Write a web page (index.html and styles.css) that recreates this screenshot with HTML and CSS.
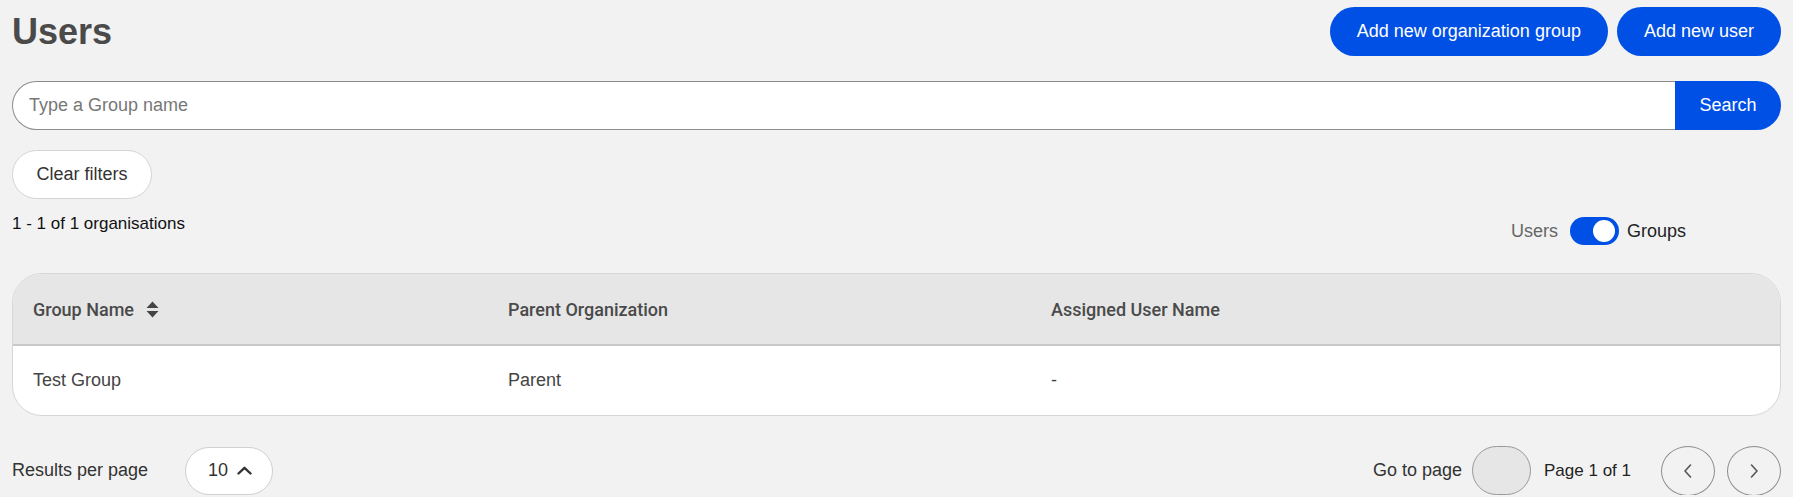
FILE: index.html
```html
<!DOCTYPE html>
<html lang="en">
<head>
<meta charset="utf-8">
<title>Users</title>
<link rel="stylesheet" href="styles.css">
</head>
<body>
<div class="page">
  <header class="top">
    <h1 class="title">Users</h1>
    <div class="actions">
      <button class="btn-primary">Add new organization group</button>
      <button class="btn-primary">Add new user</button>
    </div>
  </header>

  <div class="search">
    <input class="search-input" type="text" placeholder="Type a Group name">
    <button class="search-btn">Search</button>
  </div>

  <button class="btn-outline">Clear filters</button>

  <div class="info">
    <div class="count">1 - 1 of 1 organisations</div>
    <div class="switch">
      <span class="switch-off">Users</span>
      <span class="track"><span class="knob"></span></span>
      <span class="switch-on">Groups</span>
    </div>
  </div>

  <div class="table">
    <div class="row head">
      <div class="cell">Group Name
        <svg class="sort" width="13" height="17" viewBox="0 0 13 17"><path d="M6.5 0.5 L12.5 7 H0.5 Z M6.5 16.5 L12.5 10 H0.5 Z" fill="#444"/></svg>
      </div>
      <div class="cell">Parent Organization</div>
      <div class="cell">Assigned User Name</div>
    </div>
    <div class="row body">
      <div class="cell">Test Group</div>
      <div class="cell">Parent</div>
      <div class="cell">-</div>
    </div>
  </div>

  <footer class="foot">
    <div class="per-page">
      <span class="label">Results per page</span>
      <button class="size-pill">10
        <svg width="15" height="9" viewBox="0 0 15 9"><path d="M1.5 7.5 L7.5 1.8 L13.5 7.5" fill="none" stroke="#333" stroke-width="2.4" stroke-linecap="round" stroke-linejoin="round"/></svg>
      </button>
    </div>
    <div class="pager">
      <span class="label">Go to page</span>
      <input class="goto" type="text">
      <span class="page-of">Page 1 of 1</span>
      <div class="nav">
        <button class="circle"><svg width="10" height="16" viewBox="0 0 10 16"><path d="M7.5 2 L2 8 L7.5 14" fill="none" stroke="#555" stroke-width="1.6" stroke-linecap="round" stroke-linejoin="round"/></svg></button>
        <button class="circle"><svg width="10" height="16" viewBox="0 0 10 16"><path d="M2.5 2 L8 8 L2.5 14" fill="none" stroke="#555" stroke-width="1.6" stroke-linecap="round" stroke-linejoin="round"/></svg></button>
      </div>
    </div>
  </footer>
</div>
</body>
</html>
```

FILE: styles.css
```css
* { box-sizing: border-box; }

html, body {
  margin: 0;
  background: #f2f2f2;
  font-family: "Liberation Sans", Arial, sans-serif;
  color: #333;
}

.page {
  padding: 7px 12px 0 12px;
}

button, input {
  font-family: inherit;
}

.top {
  display: flex;
  justify-content: space-between;
  align-items: center;
  height: 49px;
}

.title {
  margin: 0;
  font-size: 36px;
  font-weight: 700;
  line-height: 49px;
  color: #4a4a4a;
}

.actions {
  display: flex;
  gap: 9px;
}

.btn-primary {
  height: 49px;
  padding: 0 27px;
  border: none;
  border-radius: 25px;
  background: #0050e6;
  color: #fff;
  font-size: 18px;
}

.search {
  display: flex;
  margin-top: 25px;
  height: 49px;
}

.search-input {
  flex: 1;
  height: 49px;
  border: 1px solid #8c8c8c;
  border-right: none;
  border-radius: 25px 0 0 25px;
  background: #fff;
  padding: 0 0 0 16px;
  font-size: 18px;
  color: #333;
  outline: none;
}

.search-input::placeholder {
  color: #777;
}

.search-btn {
  width: 106px;
  height: 49px;
  border: none;
  border-radius: 0 25px 25px 0;
  background: #0050e6;
  color: #fff;
  font-size: 18px;
  padding: 0;
}

.btn-outline {
  display: block;
  margin-top: 20px;
  height: 49px;
  width: 140px;
  border: 1px solid #d4d4d4;
  border-radius: 25px;
  background: #fff;
  color: #333;
  font-size: 18px;
  padding: 0;
}

.info {
  display: flex;
  justify-content: space-between;
  align-items: flex-start;
  margin-top: 14px;
}

.count {
  font-size: 17px;
  line-height: 22px;
  color: #111;
}

.switch {
  display: flex;
  align-items: center;
  margin-top: 4px;
  margin-right: 95px;
  font-size: 18px;
}

.switch-off {
  color: #666;
  margin-right: 12px;
}

.switch-on {
  color: #222;
  margin-left: 8px;
}

.track {
  display: flex;
  justify-content: flex-end;
  align-items: center;
  width: 49px;
  height: 28px;
  padding-right: 4px;
  border-radius: 14px;
  background: #0050e6;
}

.knob {
  width: 22px;
  height: 22px;
  border-radius: 50%;
  background: #fff;
}

.table {
  margin-top: 28px;
  border: 1px solid #d6d6d6;
  border-radius: 30px;
  overflow: hidden;
  background: #fff;
}

.row {
  display: grid;
  grid-template-columns: 475px 543px 1fr;
  align-items: center;
}

.row.head {
  height: 72px;
  background: #e6e6e6;
  border-bottom: 2px solid #c9c9c9;
  font-family: Roboto, "Liberation Sans", sans-serif;
  font-size: 18px;
  font-weight: 500;
  color: #4a4a4a;
}

.row.body {
  height: 69px;
  font-size: 18px;
  color: #444;
}

.cell {
  padding-left: 20px;
  display: flex;
  align-items: center;
}

.sort {
  margin-left: 12px;
}

.foot {
  display: flex;
  justify-content: space-between;
  align-items: center;
  margin-top: 30px;
  height: 49px;
}

.per-page {
  display: flex;
  align-items: center;
}

.label {
  font-size: 18px;
  color: #333;
}

.size-pill {
  display: flex;
  align-items: center;
  gap: 9px;
  margin-left: 37px;
  width: 88px;
  height: 48px;
  padding: 0 0 0 22px;
  border: 1px solid #d0d0d0;
  border-radius: 24px;
  background: #fff;
  font-size: 18px;
  color: #333;
}

.pager {
  display: flex;
  align-items: center;
}

.goto {
  width: 59px;
  height: 49px;
  margin-left: 10px;
  border: 1px solid #999;
  border-radius: 25px;
  background: #e6e6e6;
  outline: none;
}

.page-of {
  margin-left: 13px;
  font-size: 17px;
  color: #222;
}

.nav {
  display: flex;
  gap: 12px;
  margin-left: 30px;
}

.circle {
  display: flex;
  align-items: center;
  justify-content: center;
  width: 54px;
  height: 50px;
  padding: 0;
  border: 1px solid #8c8c8c;
  border-radius: 50%;
  background: transparent;
}
```
